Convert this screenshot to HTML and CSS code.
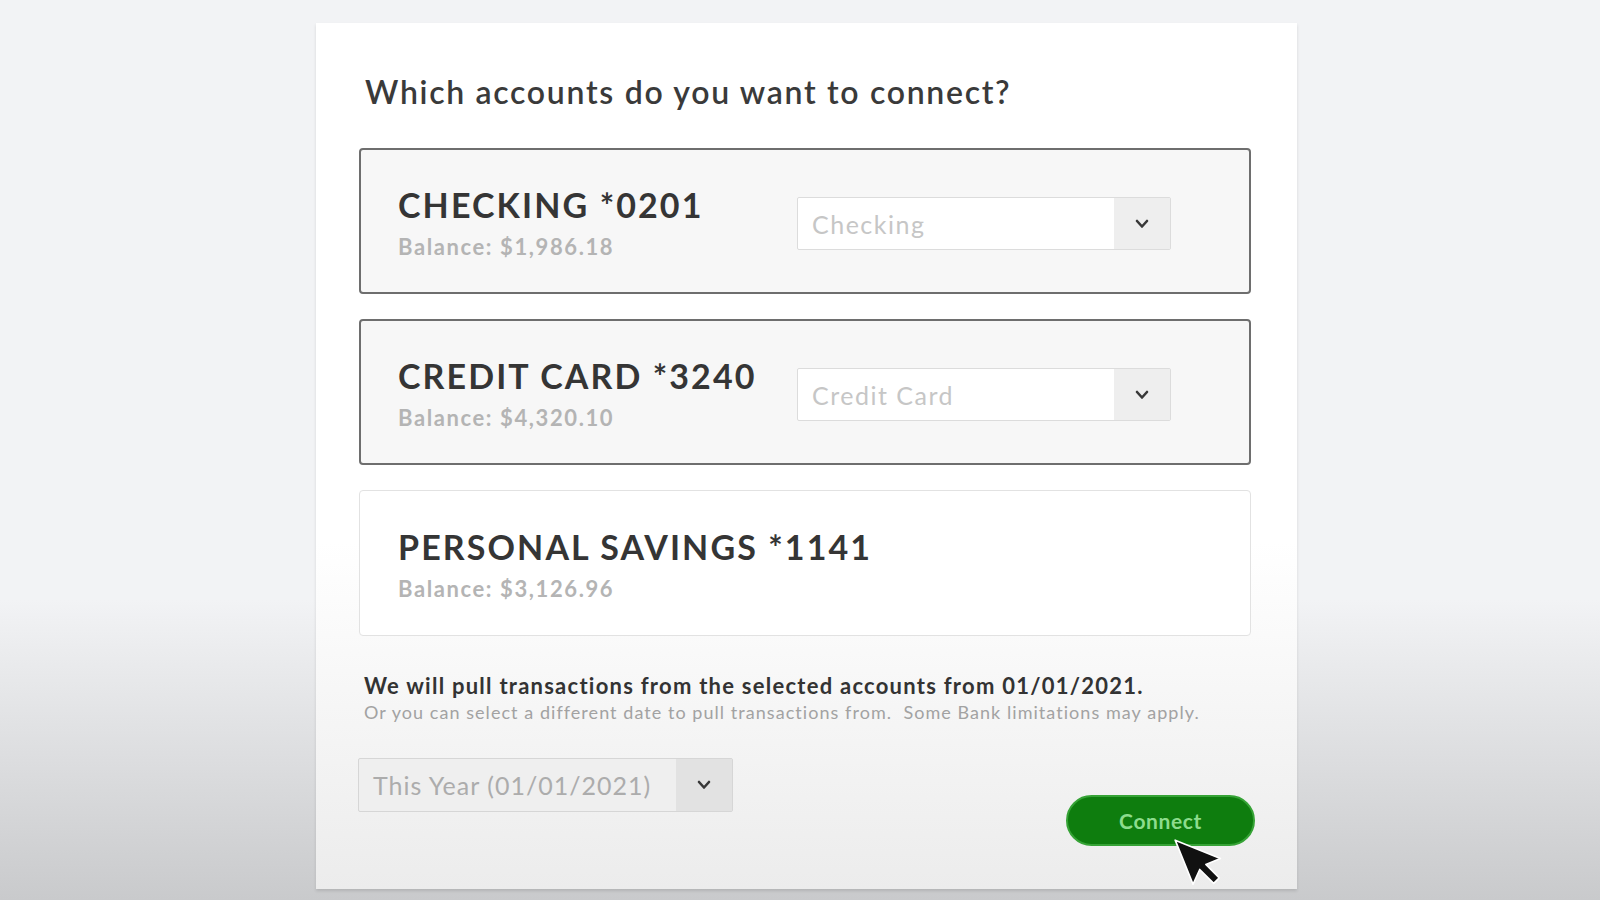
FILE: index.html
```html
<!DOCTYPE html>
<html lang="en">
<head>
    <meta charset="UTF-8">
    <meta name="viewport" content="width=device-width, initial-scale=1.0">
    <title>Connect accounts</title>
    <link rel="stylesheet" href="styles.css">
</head>
<body>
    <main class="panel">
        <h1 class="panel-title">Which accounts do you want to connect?</h1>

        <div class="accounts">
            <div class="account selected">
                <div class="account-info">
                    <div class="account-name">CHECKING *0201</div>
                    <div class="account-balance">Balance: $1,986.18</div>
                </div>
                <div class="select">
                    <span class="select-value">Checking</span>
                    <span class="select-arrow">
                        <svg width="14" height="10" viewBox="0 0 14 10"><polyline points="2,2 7,7.5 12,2" fill="none" stroke="#383838" stroke-width="2.6" stroke-linecap="round" stroke-linejoin="round"/></svg>
                    </span>
                </div>
            </div>

            <div class="account selected">
                <div class="account-info">
                    <div class="account-name">CREDIT CARD *3240</div>
                    <div class="account-balance">Balance: $4,320.10</div>
                </div>
                <div class="select">
                    <span class="select-value">Credit Card</span>
                    <span class="select-arrow">
                        <svg width="14" height="10" viewBox="0 0 14 10"><polyline points="2,2 7,7.5 12,2" fill="none" stroke="#383838" stroke-width="2.6" stroke-linecap="round" stroke-linejoin="round"/></svg>
                    </span>
                </div>
            </div>

            <div class="account">
                <div class="account-info">
                    <div class="account-name">PERSONAL SAVINGS *1141</div>
                    <div class="account-balance">Balance: $3,126.96</div>
                </div>
            </div>
        </div>

        <div class="pull-info">
            <p class="pull-main">We will pull transactions from the selected accounts from 01/01/2021.</p>
            <p class="pull-sub">Or you can select a different date to pull transactions from.&nbsp; Some Bank limitations may apply.</p>
        </div>

        <div class="footer">
            <div class="select date-select">
                <span class="select-value">This Year (01/01/2021)</span>
                <span class="select-arrow">
                    <svg width="14" height="10" viewBox="0 0 14 10"><polyline points="2,2 7,7.5 12,2" fill="none" stroke="#383838" stroke-width="2.6" stroke-linecap="round" stroke-linejoin="round"/></svg>
                </span>
            </div>
            <button class="connect-btn">
                Connect
                <!-- mouse pointer sitting on the button -->
                <svg class="cursor" width="53" height="53" viewBox="-1.5 -1.5 19 19">
                    <polygon points="0,0 6.4,15.8 8.8,10.5 13.8,15.5 15.8,13.5 11,8.7 16.2,6.6" fill="#111" stroke="#fff" stroke-width="0.6" stroke-linejoin="round"/>
                </svg>
            </button>
        </div>
    </main>
</body>
</html>
```

FILE: styles.css
```css
/* Page */
html, body {
    height: 100%;
}

body {
    margin: 0;
    padding: 0;
    overflow: hidden;
    font-family: Lato, "Open Sans", sans-serif;
    background: linear-gradient(to bottom, #f2f3f5 0, #f2f3f5 600px, #c9cacc 900px);
    color: #333;
}

.panel {
    box-sizing: border-box;
    width: 981px;
    height: 866px;
    margin: 23px 0 0 316px;
    padding: 50px 46px 0 43px;
    background: linear-gradient(to bottom, #fff 0, #fff 520px, #ececec 866px);
    box-shadow: 0 2px 3px rgba(0, 0, 0, 0.12);
}

.panel-title {
    margin: 0 0 0 6px;
    font-size: 32px;
    line-height: 38px;
    font-weight: 600;
    letter-spacing: 1.7px;
    color: #3a3a3a;
}

/* Account rows */
.accounts {
    display: flex;
    flex-direction: column;
    gap: 25px;
    margin-top: 37px;
}

.account {
    box-sizing: border-box;
    height: 146px;
    display: flex;
    align-items: center;
    padding-left: 38px;
    background-color: #fff;
    border: 1px solid #e2e2e2;
    border-radius: 4px;
}

.account.selected {
    padding-left: 37px;
    background-color: #f7f7f7;
    border: 2px solid #6e6e6e;
}

.account-info {
    width: 399px;
    padding-top: 2px;
    white-space: nowrap;
}

.account-name {
    font-size: 34px;
    line-height: 41px;
    font-weight: 700;
    letter-spacing: 2.1px;
    color: #353535;
}

.account-balance {
    margin-top: 9px;
    font-size: 22px;
    line-height: 26px;
    font-weight: 700;
    letter-spacing: 1.6px;
    color: #b4b4b4;
}

/* Dropdowns */
.select {
    box-sizing: border-box;
    width: 374px;
    height: 53px;
    margin-top: 5px;
    display: flex;
    background-color: #fff;
    border: 1px solid #dcdcdc;
    border-radius: 2px;
}

.select-value {
    flex: 1;
    display: flex;
    align-items: center;
    padding-left: 14px;
    font-size: 25px;
    letter-spacing: 1.5px;
    color: #c6c6c6;
}

.select-arrow {
    width: 56px;
    display: flex;
    justify-content: center;
    align-items: center;
    background-color: #eeeeee;
}

/* Date note */
.pull-info {
    margin-top: 37px;
    padding-left: 5px;
}

.pull-main {
    margin: 0;
    font-size: 22px;
    line-height: 26px;
    font-weight: 700;
    letter-spacing: 1.25px;
    color: #333;
}

.pull-sub {
    margin: 2px 0 0;
    font-size: 18px;
    line-height: 22px;
    letter-spacing: 1.05px;
    color: #a2a2a2;
}

.footer {
    display: flex;
    justify-content: space-between;
    align-items: flex-start;
    margin-top: 35px;
}

.date-select {
    width: 375px;
    height: 54px;
    margin: 0 0 0 -1px;
    background-color: #efefef;
    border-color: #d6d6d6;
}

.date-select .select-value {
    letter-spacing: 1px;
    color: #acacac;
}

.date-select .select-arrow {
    background-color: #e2e2e2;
}

.connect-btn {
    position: relative;
    width: 189px;
    height: 51px;
    margin: 37px -4px 0 0;
    padding: 0;
    background-color: #0e7d0e;
    border: 2px solid #36a336;
    border-radius: 26px;
    font-family: Lato, "Open Sans", sans-serif;
    font-size: 21px;
    font-weight: 700;
    letter-spacing: 0.6px;
    color: #8ddc8d;
    cursor: pointer;
}

.cursor {
    position: absolute;
    left: 103px;
    top: 39px;
}
```
